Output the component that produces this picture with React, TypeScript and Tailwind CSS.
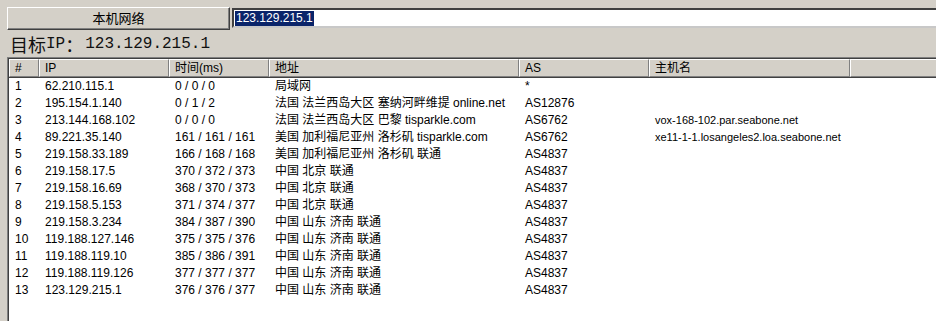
import React from "react";

const cols = [30, 130, 100, 250, 130, 201];
const heads = ["#", "IP", "时间(ms)", "地址", "AS", "主机名"];

const rows: string[][] = [
  ["1", "62.210.115.1", "0 / 0 / 0", "局域网", "*", ""],
  ["2", "195.154.1.140", "0 / 1 / 2", "法国 法兰西岛大区 塞纳河畔维提 online.net", "AS12876", ""],
  ["3", "213.144.168.102", "0 / 0 / 0", "法国 法兰西岛大区 巴黎 tisparkle.com", "AS6762", "vox-168-102.par.seabone.net"],
  ["4", "89.221.35.140", "161 / 161 / 161", "美国 加利福尼亚州 洛杉矶 tisparkle.com", "AS6762", "xe11-1-1.losangeles2.loa.seabone.net"],
  ["5", "219.158.33.189", "166 / 168 / 168", "美国 加利福尼亚州 洛杉矶 联通", "AS4837", ""],
  ["6", "219.158.17.5", "370 / 372 / 373", "中国 北京 联通", "AS4837", ""],
  ["7", "219.158.16.69", "368 / 370 / 373", "中国 北京 联通", "AS4837", ""],
  ["8", "219.158.5.153", "371 / 374 / 377", "中国 北京 联通", "AS4837", ""],
  ["9", "219.158.3.234", "384 / 387 / 390", "中国 山东 济南 联通", "AS4837", ""],
  ["10", "119.188.127.146", "375 / 375 / 376", "中国 山东 济南 联通", "AS4837", ""],
  ["11", "119.188.119.10", "385 / 386 / 391", "中国 山东 济南 联通", "AS4837", ""],
  ["12", "119.188.119.126", "377 / 377 / 377", "中国 山东 济南 联通", "AS4837", ""],
  ["13", "123.129.215.1", "376 / 376 / 377", "中国 山东 济南 联通", "AS4837", ""],
];

const cjk = { fontFamily: '"Noto Sans CJK SC", sans-serif' };
const mono = { fontFamily: '"Liberation Mono", monospace' };

export default function App() {
  return (
    <div
      className="w-[936px] h-[321px] overflow-hidden bg-[#d4d0c8] text-black flex flex-col"
      style={{ fontFamily: '"Liberation Sans", "Noto Sans CJK SC", sans-serif' }}
    >
      {/* top bar */}
      <div className="flex items-start pt-[7px] pl-[7px] gap-[2px]">
        <button className="w-[223px] h-[23px] text-[13px] leading-[19px] border border-t-white border-l-white border-r-[#404040] border-b-[#404040] shadow-[inset_-1px_-1px_0_#808080,inset_1px_1px_0_#d4d0c8] bg-[#d4d0c8]">
          本机网络
        </button>
        <div className="flex-1 h-[20px] mt-[1px] bg-white border-t-2 border-l-2 border-t-[#404040] border-l-[#404040] border-b-2 border-b-[#c8c8c8] flex items-center pl-[1px]">
          <span className="bg-[#0a246a] text-white text-[12px] leading-[15px] px-[1px]">123.129.215.1</span>
        </div>
      </div>

      {/* title */}
      <div className="pl-[10px] h-[27px] flex items-center text-[#111] whitespace-pre">
        <span className="text-[18px] leading-[22px]" style={cjk}>目标</span>
        <span className="text-[16px] leading-[22px] pt-[1px]" style={mono}>IP</span>
        <span className="text-[18px] leading-[22px]" style={cjk}>：</span>
        <span className="text-[16px] leading-[22px] pt-[1px] ml-[2px]" style={mono}>123.129.215.1</span>
      </div>

      {/* list */}
      <div className="ml-[7px] flex-1 border-t border-l border-[#808080]">
        <div className="h-full border-t border-l border-[#404040] bg-white flex flex-col">
          <div className="flex h-[18px] bg-[#d4d0c8] shadow-[0_1px_0_#404040]">
            {heads.map((h, i) => (
              <div
                key={i}
                style={{ width: cols[i] }}
                className="shrink-0 h-full border-t border-l border-white border-r border-r-[#808080] border-b border-b-[#808080] pl-[5px] text-[12px] leading-[16px] whitespace-nowrap"
              >
                {h}
              </div>
            ))}
            <div className="flex-1 h-full border-t border-l border-white border-b border-b-[#808080]" />
          </div>
          <div className="pt-[1px]">
            {rows.map((r, ri) => (
              <div key={ri} className="flex h-[17px] text-[12px] leading-[17px]">
                {r.map((c, ci) => (
                  <div
                    key={ci}
                    style={{ width: cols[ci] }}
                    className={
                      ci === 5
                        ? "shrink-0 pl-[6px] whitespace-nowrap text-[11px]"
                        : "shrink-0 pl-[6px] whitespace-nowrap"
                    }
                  >
                    {c}
                  </div>
                ))}
              </div>
            ))}
          </div>
        </div>
      </div>
    </div>
  );
}
